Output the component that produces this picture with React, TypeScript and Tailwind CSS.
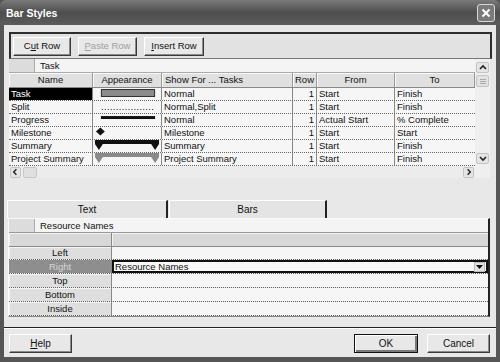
import React from "react";

const rows = [
  { name: "Task", kind: "task", show: "Normal", from: "Start", to: "Finish" },
  { name: "Split", kind: "split", show: "Normal,Split", from: "Start", to: "Finish" },
  { name: "Progress", kind: "progress", show: "Normal", from: "Actual Start", to: "% Complete" },
  { name: "Milestone", kind: "milestone", show: "Milestone", from: "Start", to: "Start" },
  { name: "Summary", kind: "summary", show: "Summary", from: "Start", to: "Finish" },
  { name: "Project Summary", kind: "project", show: "Project Summary", from: "Start", to: "Finish" },
];

const textRows = ["Left", "Right", "Top", "Bottom", "Inside"];

const BarGlyph = ({ kind }: { kind: string }) => {
  return (
    <svg width="69" height="12" viewBox="0 0 69 12">
      {kind === "task" && <rect x="8.5" y="1.5" width="54" height="7" fill="#8c8c8c" stroke="#2a2a2a" />}
      {kind === "split" && (
        <line x1="9" y1="8.5" x2="62" y2="8.5" stroke="#222" strokeDasharray="1 2" />
      )}
      {kind === "progress" && <rect x="8" y="2" width="55" height="3" fill="#111" />}
      {kind === "milestone" && <polygon points="7.5,0.5 12,4.5 7.5,8.5 3,4.5" fill="#111" />}
      {kind === "summary" && (
        <path d="M2 0H67V4L63 10L59 4H10L6 10L2 4Z" fill="#111" />
      )}
      {kind === "project" && (
        <path d="M2 0H67V4L63 10L59 4H10L6 10L2 4Z" fill="#8a8a8a" />
      )}
    </svg>
  );
};

const Btn = ({ children, w, disabled, def }: { children: React.ReactNode; w: string; disabled?: boolean; def?: boolean }) => (
  <div
    className={`${w} h-[19px] flex items-center justify-center border ${
      def ? "border-[#111] shadow-[inset_1px_1px_#fff,inset_-2px_-2px_#7a7a7a]" : "border-t-white border-l-white border-r-[#3a3a3a] border-b-[#3a3a3a] shadow-[inset_-1px_-1px_#8a8a8a]"
    } bg-[#e8e8e8] ${disabled ? "text-[#a0a0a0]" : "text-[#111]"}`}
  >
    {children}
  </div>
);

const ArrowBox = ({ dir, className }: { dir: "up" | "down" | "left" | "right"; className: string }) => {
  const pts: Record<string, string> = {
    up: "2,6 5,3 8,6",
    down: "2,3 5,6 8,3",
    left: "6,2 3,5 6,8",
    right: "4,2 7,5 4,8",
  };
  return (
    <div className={`${className} flex items-center justify-center bg-[#e4e4e4] border border-[#c4c4c4] rounded-[2px]`}>
      <svg width="10" height="10" viewBox="0 0 10 10">
        <polyline points={pts[dir]} fill="none" stroke="#222" strokeWidth="1.6" />
      </svg>
    </div>
  );
};

export default function App() {
  return (
    <div className="w-[500px] h-[362px] bg-[#565656] flex flex-col font-['Liberation_Sans',Arial,sans-serif] text-[9.5px] text-[#111] leading-none overflow-hidden">
      {/* title bar */}
      <div className="h-[25px] flex items-center justify-between pl-[6px] pr-[5px] rounded-t-[6px] bg-gradient-to-b from-[#7a7a7a] via-[#4e4e4e] to-[#5c5c5c]">
        <span className="text-white font-bold text-[10.5px] pt-[1px]">Bar Styles</span>
        <div className="w-[18px] h-[18px] rounded-[3px] border border-[#d8d8d8] bg-[#7a7a7a] flex items-center justify-center">
          <svg width="10" height="10" viewBox="0 0 10 10">
            <path d="M1.5 1.5L8.5 8.5M8.5 1.5L1.5 8.5" stroke="#fff" strokeWidth="2" />
          </svg>
        </div>
      </div>

      {/* body */}
      <div className="flex-1 mx-[4px] mb-[5px] bg-[#e8e8e8] flex flex-col pl-[5px] pr-[4px] pt-[7px]">
        {/* toolbar */}
        <div className="h-[27px] border-2 border-[#2e2e2e] border-b border-b-[#777] bg-[#e2e2e2] flex items-center gap-[7px] pl-[2px]">
          <Btn w="w-[58px]">
            C<span className="underline">u</span>t Row
          </Btn>
          <Btn w="w-[59px]" disabled>
            <span className="underline">P</span>aste Row
          </Btn>
          <Btn w="w-[60px]">
            <span className="underline">I</span>nsert Row
          </Btn>
        </div>

        {/* grid */}
        <div className="flex">
          <div className="w-[466px] flex flex-col">
            <div className="h-[14px] flex border-b border-[#aaa]">
              <div className="w-[26px] bg-[#dcdcdc] border-r border-[#aaa]" />
              <div className="flex-1 bg-[#f4f4f4] flex items-center pl-[5px]">Task</div>
            </div>
            <div className="h-[15px] flex bg-[#e0e0e0] border-b border-[#888]">
              {[
                ["Name", "w-[84px]"],
                ["Appearance", "w-[69px]"],
                ["Show For ... Tasks", "w-[131px] justify-start pl-[3px]"],
                ["Row", "w-[24px]"],
                ["From", "w-[78px]"],
                ["To", "w-[80px]"],
              ].map(([t, c]) => (
                <div key={t} className={`${c} flex items-center justify-center border-r border-[#999] shadow-[inset_1px_1px_#fafafa]`}>
                  {t}
                </div>
              ))}
            </div>
            {rows.map((r, i) => (
              <div key={r.name} className="h-[13px] flex bg-[#f6f6f6] border-b border-dotted border-[#666]">
                <div className={`w-[84px] flex items-center pl-[2px] border-r border-[#888] ${i === 0 ? "bg-black text-white" : ""}`}>
                  {r.name}
                </div>
                <div className="w-[69px] flex items-center border-r border-[#888]">
                  <BarGlyph kind={r.kind} />
                </div>
                <div className="w-[131px] flex items-center pl-[2px] border-r border-[#888]">{r.show}</div>
                <div className="w-[24px] flex items-center justify-end pr-[2px] border-r border-[#888]">1</div>
                <div className="w-[78px] flex items-center pl-[2px] border-r border-[#888]">{r.from}</div>
                <div className="w-[80px] flex items-center pl-[2px]">{r.to}</div>
              </div>
            ))}
            <div className="h-[12px] flex items-center bg-[#ececec] pl-[1px] pr-[1px] gap-[2px]">
              <ArrowBox dir="left" className="w-[11px] h-[11px]" />
              <div className="w-[14px] h-[11px] bg-[#e0e0e0] border border-[#c8c8c8] rounded-[2px]" />
              <div className="flex-1" />
              <ArrowBox dir="right" className="w-[11px] h-[11px]" />
            </div>
          </div>
          <div className="w-[15px] flex flex-col bg-[#efefef] pt-[3px] pb-[14px] px-[1px]">
            <ArrowBox dir="up" className="w-[13px] h-[11px]" />
            <div className="w-[13px] h-[12px] mt-[2px] bg-[#e2e2e2] border border-[#c4c4c4] rounded-[2px] flex flex-col justify-center items-center gap-[1px]">
              <div className="w-[6px] h-px bg-[#aaa]" />
              <div className="w-[6px] h-px bg-[#aaa]" />
              <div className="w-[6px] h-px bg-[#aaa]" />
            </div>
            <div className="flex-1" />
            <ArrowBox dir="down" className="w-[13px] h-[11px]" />
          </div>
        </div>

        {/* tabs */}
        <div className="mt-[22px] -ml-[2px] h-[18px] flex">
          <div className="w-[161px] flex items-center justify-center bg-[#e4e4e4] border-t border-l border-white border-r-2 border-r-[#222] text-[10px]">
            Text
          </div>
          <div className="w-[158px] ml-[1px] flex items-center justify-center bg-[#e4e4e4] border-t border-l border-white border-r-2 border-r-[#222] text-[10px]">
            Bars
          </div>
        </div>

        {/* text grid */}
        <div className="-ml-[1px] mr-[2px] h-[99px] border-l border-t border-[#fafafa] border-r-2 border-r-[#222] border-b border-b-[#888] bg-[#e6e6e6] flex flex-col">
          <div className="h-[14px] flex border-b border-[#999]">
            <div className="w-[26px] bg-[#dcdcdc] border-r border-[#aaa]" />
            <div className="flex-1 bg-[#f4f4f4] flex items-center pl-[5px]">Resource Names</div>
          </div>
          <div className="h-[14px] flex bg-[#d8d8d8] border-b border-[#888]">
            <div className="w-[103px] border-r border-[#888] shadow-[inset_1px_1px_#f2f2f2]" />
            <div className="flex-1 shadow-[inset_1px_1px_#f2f2f2]" />
          </div>
          {textRows.map((t) => {
            const sel = t === "Right";
            return (
              <div key={t} className="h-[14px] flex border-b border-dotted border-[#666]">
                <div
                  className={`w-[103px] flex items-center justify-center border-r border-[#888] ${
                    sel ? "bg-[#8e8e8e] text-[#d8d8d8]" : "bg-[#dedede] shadow-[inset_1px_1px_#f4f4f4]"
                  }`}
                >
                  {t}
                </div>
                {sel ? (
                  <div className="flex-1 bg-[#f8f8f8] border-2 border-[#111] flex items-center justify-between pl-[1px] pr-[1px]">
                    <span>Resource Names</span>
                    <div className="w-[11px] h-[10px] bg-[#e4e4e4] border border-[#bbb] flex items-center justify-center">
                      <svg width="7" height="4" viewBox="0 0 7 4">
                        <path d="M0 0H7L3.5 4Z" fill="#111" />
                      </svg>
                    </div>
                  </div>
                ) : (
                  <div className="flex-1 bg-[#f6f6f6]" />
                )}
              </div>
            );
          })}
        </div>

        {/* separator */}
        <div className="mt-[10px] -ml-[5px] -mr-[4px] h-[2px] border-t border-[#222] border-b border-b-white" />

        {/* bottom buttons */}
        <div className="mt-[5px] flex items-center">
          <Btn w="w-[63px] text-[10px]">
            <span className="underline">H</span>elp
          </Btn>
          <div className="flex-1" />
          <Btn w="w-[64px] text-[10px]" def>
            OK
          </Btn>
          <div className="w-[9px]" />
          <Btn w="w-[63px] text-[10px]">Cancel</Btn>
          <div className="w-[2px]" />
        </div>
      </div>
    </div>
  );
}
